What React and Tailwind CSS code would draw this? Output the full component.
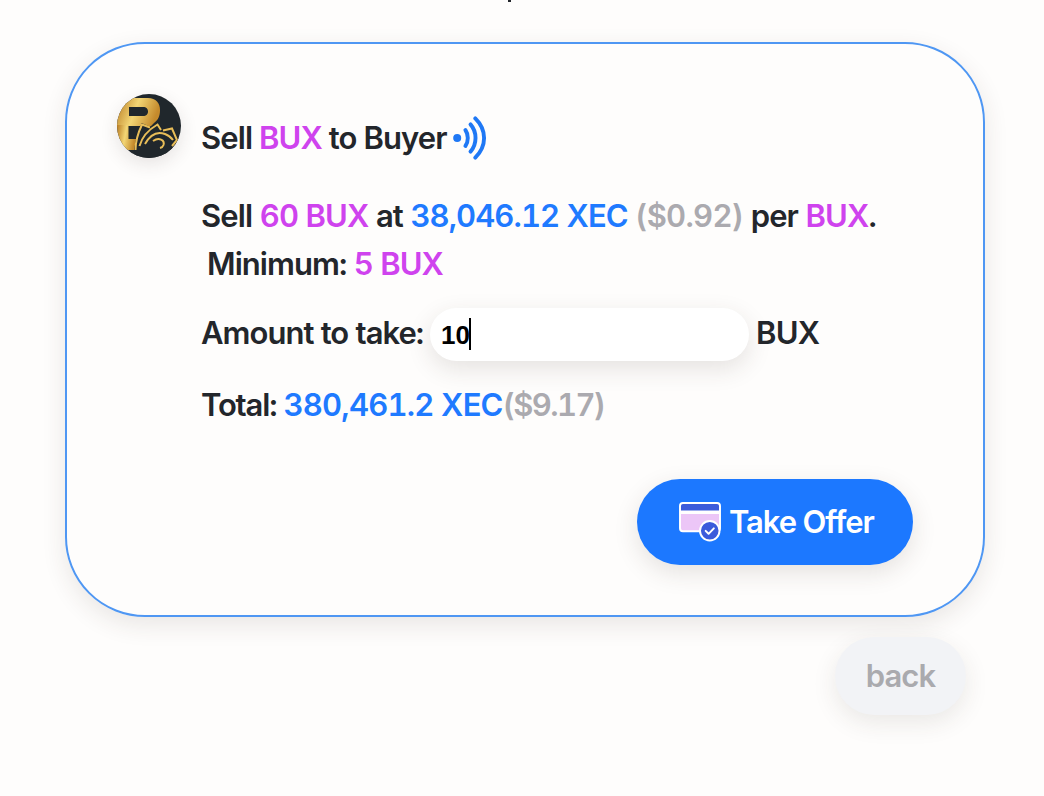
import React from "react";

const SignalIcon = () => (
  <svg width="34" height="44" viewBox="0 0 34 44" fill="none" className="shrink-0">
    <circle cx="4.2" cy="22" r="4" fill="#1f78f5" />
    <g stroke="#1f78f5" strokeWidth="3.9" strokeLinecap="round">
      <path d="M12.4 14C15.6 18.5 15.6 25.5 12.4 30" />
      <path d="M17.5 8.4C24.2 16 24.2 28 17.5 35.6" />
      <path d="M22.3 2.4C34 14 34 30 22.3 41.6" />
    </g>
  </svg>
);

const CardCheckIcon = () => (
  <svg width="42" height="40" viewBox="0 0 43 41" fill="none" className="shrink-0">
    <rect x="1" y="1" width="41" height="29" rx="3" fill="#ecc6f7" />
    <path d="M1 4a3 3 0 0 1 3-3h35a3 3 0 0 1 3 3v6H1z" fill="#3b5bdb" />
    <path d="M1 10.5h41" stroke="#fff" strokeWidth="3.6" />
    <rect x="1" y="1" width="41" height="29" rx="3" stroke="#fff" strokeWidth="2" />
    <circle cx="31.5" cy="29.5" r="10" fill="#3b5bdb" stroke="#fff" strokeWidth="2" />
    <path d="M27.3 29.6l3 3 5.4-5.6" stroke="#fff" strokeWidth="2" strokeLinecap="round" strokeLinejoin="round" />
  </svg>
);

const BuxLogo = () => (
  <svg width="64" height="64" viewBox="0 0 64 64" className="rounded-full">
    <defs>
      <linearGradient id="gold" x1="0" y1="0" x2="1" y2="0.25">
        <stop offset="0" stopColor="#b87b22" />
        <stop offset="0.5" stopColor="#f3d675" />
        <stop offset="1" stopColor="#c48a2c" />
      </linearGradient>
    </defs>
    <rect width="64" height="64" fill="#20272c" />
    {/* letter mark */}
    <path
      d="M0 4H31C39 4 43 9 43 16C43 22 41 26 37 29L34 32H0ZM12 13V22H26C29.5 22 31 20 31 17.5C31 15 29.5 13 26 13Z"
      fill="url(#gold)"
      fillRule="evenodd"
    />
    <path d="M0 31H11.5V45H19L17 56H0Z" fill="url(#gold)" />
    {/* fanned bank notes */}
    <path d="M19 46L24.5 29L34 33L41 29L46 35L56 33L64 50V64H17Z" fill="#20272c" />
    <g stroke="#e8bd58" fill="none">
      <path d="M18.5 56C18.5 47 21 39 25 30.5L33 33.5" strokeWidth="2" />
      <path d="M22.5 52C25 43 31 36 40.5 30.5L44 36" strokeWidth="2" />
      <path d="M28 50C33 41 40 37 48 40C52 41.5 54 43 56 46" strokeWidth="2" />
      <path d="M46 36.5L55 34.5L60 46L55 52" strokeWidth="2" />
      <path d="M36 47C42 43 48 46 46.5 51C46 52.5 45 53.5 43 54" strokeWidth="2" />
    </g>
  </svg>
);

export default function App() {
  return (
    <div className="h-[796px] w-[1044px] overflow-hidden bg-[#fefdfc] font-[Inter,sans-serif] text-[31px] font-[570] leading-[48px] text-[#23262b]">
      {/* tail of the heading scrolled off the top */}
      <div className="ml-[508px] h-[2px] w-[3px] bg-[#23262b]"></div>
      <div className="ml-[65px] mt-10 flex h-[575px] w-[920px] flex-col rounded-[80px] border-2 border-[#4f97f3] pl-[50px] shadow-[0_8px_24px_rgba(60,45,40,0.11)]">
        <div className="flex pt-[50px]">
          <div className="h-16 w-16 rounded-full shadow-[0_6px_18px_rgba(60,45,40,0.12)]">
            <BuxLogo />
          </div>
          <div className="ml-5 flex h-[88px] items-center whitespace-nowrap">
            <p className="mr-[7px] w-[245px] tracking-[-0.9px]">
              Sell <span className="text-[#cf43ee]">BUX</span> to Buyer
            </p>
            <SignalIcon />
          </div>
        </div>
        <div className="ml-[84px] mt-[10px] whitespace-nowrap tabular-nums">
          <p className="tracking-[-0.87px]">
            Sell <span className="text-[#cf43ee]">60 BUX</span> at{" "}
            <span className="tracking-[-0.92px] text-[#1f7aff]">38,046.12 XEC</span>{" "}
            <span className="tracking-[-0.7px] text-[#abaaaf]">($0.92)</span> per{" "}
            <span className="text-[#cf43ee]">BUX</span>.
          </p>
          <p className="ml-[6px] tracking-[-0.95px]">
            Minimum: <span className="text-[#cf43ee]">5 BUX</span>
          </p>
          <div className="mt-5 flex h-[53px] items-center">
            <label className="-mt-[3px] w-[229px] tracking-[-0.98px]">Amount to take:</label>
            <div className="flex h-[53px] w-[319px] items-center rounded-full bg-white pl-[11px] shadow-[0_8px_24px_rgba(60,45,40,0.13)]">
              <span className="font-['Liberation_Sans',sans-serif] text-[26px] font-bold text-black">10</span>
              <span className="-ml-px -mt-[2px] h-8 w-[2px] bg-black"></span>
            </div>
            <span className="-mt-[3px] ml-[7px] tracking-[-0.7px]">BUX</span>
          </div>
          <p className="mt-[20px] tracking-[-1.15px]">
            Total: <span className="tracking-[-0.78px] text-[#1f7aff]">380,461.2 XEC</span>
            <span className="tracking-[-1.6px] text-[#abaaaf]">($9.17)</span>
          </p>
        </div>
        <button className="ml-[520px] mt-[50px] flex h-[86px] w-[276px] shrink-0 items-center rounded-full bg-[#1c78ff] pl-[42px] text-white shadow-[0_8px_24px_rgba(60,45,40,0.13)]">
          <CardCheckIcon />
          <span className="ml-[8px] whitespace-nowrap tracking-[-1.1px]">Take Offer</span>
        </button>
      </div>
      <button className="ml-[835px] mt-5 flex h-[78px] w-[131px] items-center justify-center rounded-full bg-[#f2f3f6] tracking-[-0.9px] text-[#aaaaae] shadow-[0_8px_24px_rgba(60,45,40,0.1)]">
        back
      </button>
    </div>
  );
}
